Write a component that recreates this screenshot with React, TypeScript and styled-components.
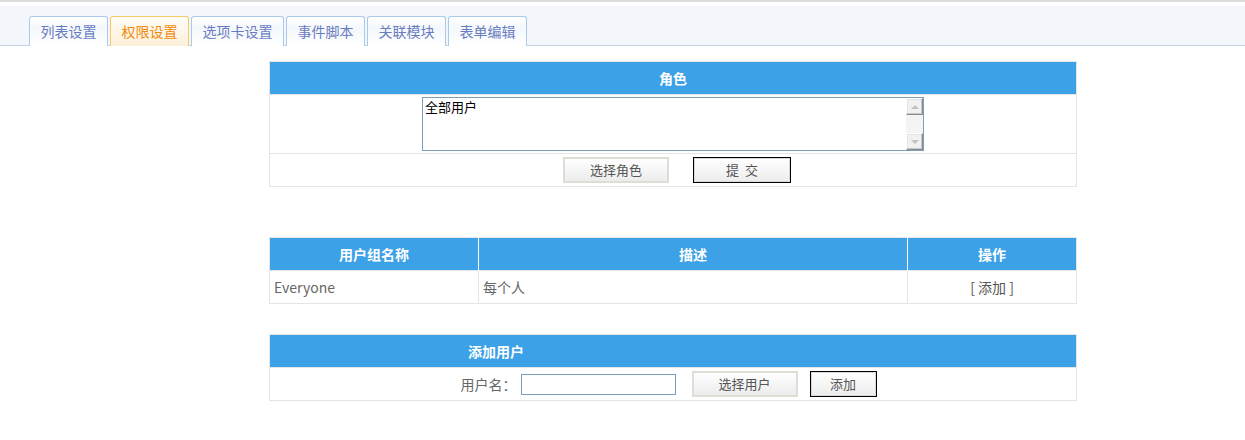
import styled, { createGlobalStyle } from "styled-components";

const GlobalStyle = createGlobalStyle`
  html, body {
    margin: 0;
    padding: 0;
    background: #fff;
    font-family: "Noto Sans CJK SC", "Open Sans", sans-serif;
  }
`;

const TopLine = styled.div`
  height: 2px;
  background: #dcdcdc;
  border-bottom: 4px solid #fff;
`;

const TabBar = styled.div`
  display: flex;
  gap: 2px;
  padding: 10px 0 0 29px;
  height: 29px;
  background: #f3f7fb;
  border-bottom: 1px solid #c5d3e3;
`;

const Tab = styled.div<{ $active?: boolean }>`
  box-sizing: border-box;
  height: 30px;
  padding: 0 10.5px;
  border: 1px solid ${(p) => (p.$active ? "#f5cb6a" : "#a9cbe9")};
  border-bottom: none;
  border-radius: 3px 3px 0 0;
  background: ${(p) =>
    p.$active
      ? "linear-gradient(#fffdf8, #fdf0d8)"
      : "linear-gradient(#ffffff, #f4f8fc 40%, #ffffff)"};
  color: ${(p) => (p.$active ? "#f08a0c" : "#6a7cc0")};
  font-size: 14px;
  line-height: 29px;
  white-space: nowrap;
`;

const Panel = styled.table<{ $top: number }>`
  width: 808px;
  margin: ${(p) => p.$top}px 0 0 269px;
  border-collapse: collapse;
  border: 1px solid #e5e5e5;
  font-size: 14px;
  color: #666;
`;

const Head = styled.th<{ $w?: number; $left?: number }>`
  height: 32px;
  padding: 0 0 0 ${(p) => p.$left ?? 0}px;
  background: #3ca1e6;
  color: #fff;
  font-weight: bold;
  font-size: 14px;
  text-align: ${(p) => (p.$left ? "left" : "center")};
  border-right: 1px solid #fff;
  width: ${(p) => (p.$w ? `${p.$w}px` : "auto")};
  &:last-child {
    border-right: none;
  }
`;

const Cell = styled.td<{ $h: number; $align?: string }>`
  height: ${(p) => p.$h}px;
  padding: 0 4px;
  border: 1px solid #e5e5e5;
  text-align: ${(p) => p.$align ?? "left"};
  vertical-align: middle;
`;

const BoxRow = styled.div`
  display: flex;
  justify-content: center;
  align-items: center;
`;

const AreaBox = styled.div`
  display: flex;
  width: 502px;
  height: 54px;
  box-sizing: border-box;
  border: 1px solid #7f9db9;
`;

const Area = styled.textarea`
  flex: 1;
  border: none;
  outline: none;
  resize: none;
  padding: 1px 2px;
  margin: 0;
  font-family: "Noto Sans CJK SC", sans-serif;
  font-size: 13px;
  line-height: 16px;
  color: #000;
  overflow: hidden;
`;

const ScrollTrack = styled.div`
  width: 17px;
  display: flex;
  flex-direction: column;
  justify-content: space-between;
  background: #f4f4f4;
`;

const ScrollBtn = styled.div<{ $down?: boolean }>`
  height: 17px;
  box-sizing: border-box;
  background: #f1f1f1;
  border: 1px solid #fff;
  border-right-color: #8a8a8a;
  border-bottom-color: #8a8a8a;
  box-shadow: inset -1px -1px 0 #c8c8c8, inset 1px 1px 0 #e4e4e4;
  display: flex;
  align-items: center;
  justify-content: center;
  &::after {
    content: "";
    border-left: 4px solid transparent;
    border-right: 4px solid transparent;
    ${(p) =>
      p.$down ? "border-top: 4px solid #c2c2c2;" : "border-bottom: 4px solid #c2c2c2;"}
  }
`;

const ButtonRow = styled.div<{ $gap: number; $shift?: number }>`
  display: flex;
  justify-content: center;
  align-items: center;
  gap: ${(p) => p.$gap}px;
  padding-left: ${(p) => (p.$shift && p.$shift > 0 ? p.$shift : 0)}px;
  padding-right: ${(p) => (p.$shift && p.$shift < 0 ? -p.$shift : 0)}px;
`;

const Button = styled.button<{ $w: number; $primary?: boolean }>`
  width: ${(p) => p.$w}px;
  height: 26px;
  margin: 0;
  padding: 0;
  border: ${(p) => (p.$primary ? "1px solid #000" : "2px solid #deded6")};
  box-shadow: ${(p) => (p.$primary ? "inset 0 0 0 1px #d8d8d8" : "none")};
  background: linear-gradient(#ffffff, #ececec);
  color: #555;
  font-family: "Noto Sans CJK SC", sans-serif;
  font-size: 13px;
  line-height: 22px;
  cursor: pointer;
`;

const Label = styled.span`
  color: #666;
  font-size: 14px;
  margin-right: 4px;
`;

const TextInput = styled.input`
  width: 155px;
  height: 21px;
  box-sizing: border-box;
  border: 1px solid #7f9db9;
  margin: 0 16px 0 0;
  padding: 0 2px;
  outline: none;
`;

const LinkText = styled.span`
  color: #555;
`;

const tabs = ["列表设置", "权限设置", "选项卡设置", "事件脚本", "关联模块", "表单编辑"];

export default function App() {
  return (
    <>
      <GlobalStyle />
      <TopLine />
      <TabBar>
        {tabs.map((t) => (
          <Tab key={t} $active={t === "权限设置"}>
            {t}
          </Tab>
        ))}
      </TabBar>

      <Panel $top={15}>
        <thead>
          <tr>
            <Head>角色</Head>
          </tr>
        </thead>
        <tbody>
          <tr>
            <Cell $h={58}>
              <BoxRow>
                <AreaBox>
                  <Area defaultValue="全部用户" />
                  <ScrollTrack>
                    <ScrollBtn />
                    <ScrollBtn $down />
                  </ScrollTrack>
                </AreaBox>
              </BoxRow>
            </Cell>
          </tr>
          <tr>
            <Cell $h={32}>
              <ButtonRow $gap={24} $shift={8}>
                <Button $w={106}>选择角色</Button>
                <Button $w={98} $primary>
                  提&nbsp;&nbsp;交
                </Button>
              </ButtonRow>
            </Cell>
          </tr>
        </tbody>
      </Panel>

      <Panel $top={50}>
        <thead>
          <tr>
            <Head $w={208}>用户组名称</Head>
            <Head $w={428}>描述</Head>
            <Head>操作</Head>
          </tr>
        </thead>
        <tbody>
          <tr>
            <Cell $h={32}>Everyone</Cell>
            <Cell $h={32}>每个人</Cell>
            <Cell $h={32} $align="center">
              <LinkText>[ 添加 ]</LinkText>
            </Cell>
          </tr>
        </tbody>
      </Panel>

      <Panel $top={30}>
        <thead>
          <tr>
            <Head $left={198}>添加用户</Head>
          </tr>
        </thead>
        <tbody>
          <tr>
            <Cell $h={32}>
              <ButtonRow $gap={0} $shift={-9}>
                <Label>用户名：</Label>
                <TextInput />
                <Button $w={106} style={{ marginRight: 12 }}>
                  选择用户
                </Button>
                <Button $w={67} $primary>
                  添加
                </Button>
              </ButtonRow>
            </Cell>
          </tr>
        </tbody>
      </Panel>
    </>
  );
}
